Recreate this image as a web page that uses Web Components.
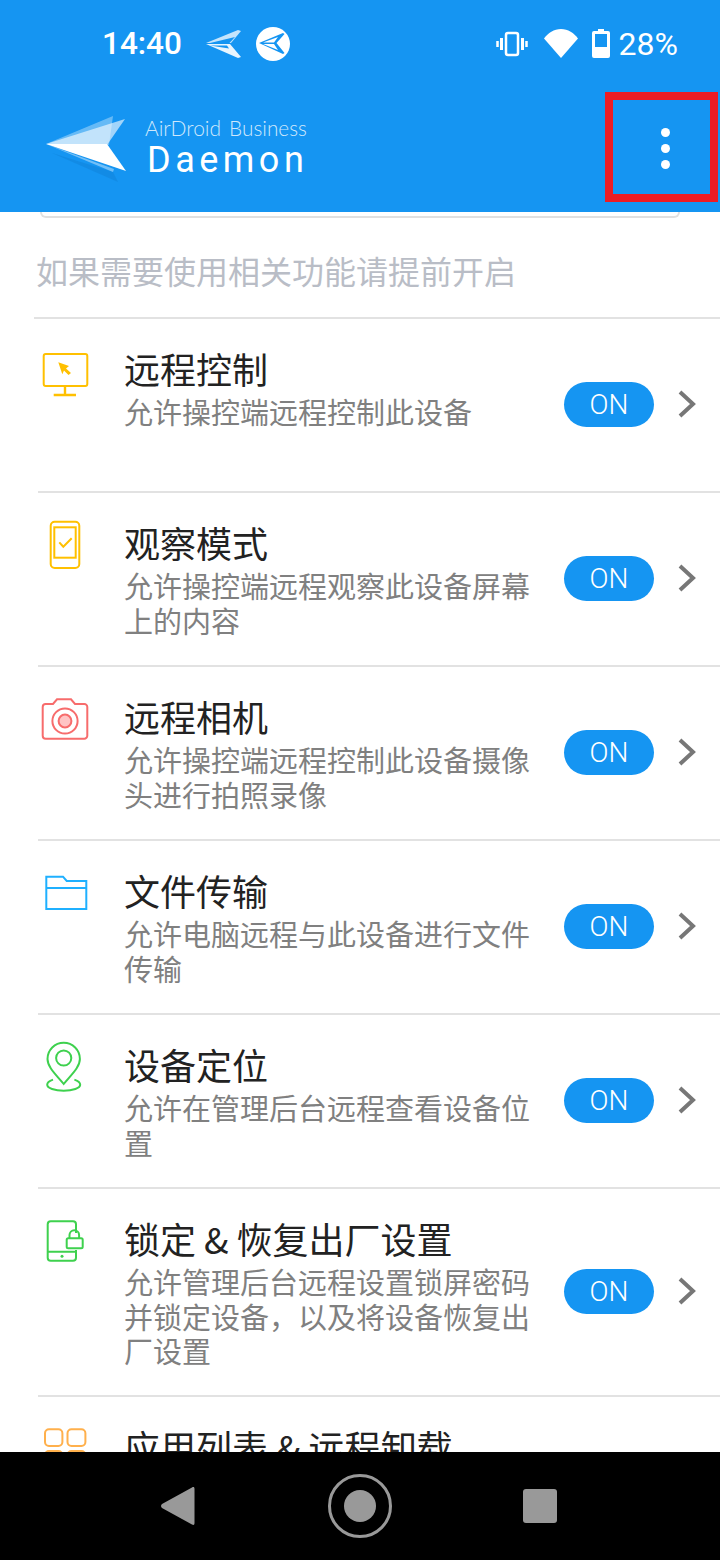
<!DOCTYPE html>
<html lang="zh">
<head>
<meta charset="utf-8">
<title>AirDroid Business Daemon</title>
<style>
  html, body { margin: 0; padding: 0; background: #fff; }
  body { font-family: "Noto Sans CJK SC", "Noto Sans", sans-serif; }
  feature-row svg { display: block; fill: none; stroke-width: 2; }
</style>
</head>
<body>
<phone-screen>
  <status-bar slot="top"></status-bar>
  <app-header slot="top"></app-header>

  <top-card></top-card>
  <section-hint>如果需要使用相关功能请提前开启</section-hint>

  <feature-row heading="远程控制" sub="允许操控端远程控制此设备" style="--row-h:174px">
    <svg width="87" height="70" stroke="#ffc000">
      <rect x="5.7" y="12" width="43.6" height="32" rx="2"/>
      <path d="M27 44v8M15.7 53h22.3" stroke-width="2.4"/>
      <polygon points="20.3,20.3 31,24 28,26.5 33,31 30.5,33 26,28.5 24.3,32.3" fill="#ffc000" stroke="none"/>
    </svg>
  </feature-row>

  <feature-row heading="观察模式" sub="允许操控端远程观察此设备屏幕上的内容" style="--row-h:174px">
    <svg width="87" height="70" stroke="#ffc000">
      <rect x="12.7" y="5.7" width="28.6" height="46.3" rx="4"/>
      <rect x="16.3" y="11.3" width="21.4" height="30.4"/>
      <path d="M21.3 26.3l4 4.4 8.4-8.4"/>
    </svg>
  </feature-row>

  <feature-row heading="远程相机" sub="允许操控端远程控制此设备摄像头进行拍照录像" style="--row-h:174px">
    <svg width="87" height="70" stroke="#f76c6c">
      <path d="M7.7 14H15l4-4.7h14l4 4.7h9.3a3 3 0 0 1 3 3v28.7a3 3 0 0 1-3 3H7.7a3 3 0 0 1-3-3V17a3 3 0 0 1 3-3z"/>
      <circle cx="27" cy="31" r="12.6"/>
      <circle cx="27" cy="31" r="6.4" fill="#ffc4c4"/>
    </svg>
  </feature-row>

  <feature-row heading="文件传输" sub="允许电脑远程与此设备进行文件传输" style="--row-h:174px">
    <svg width="87" height="70" stroke="#1fb0ff">
      <path d="M8.3 12.7h16.7l3.7 4.3h19.6v28h-40z"/>
      <path d="M8 24h40"/>
    </svg>
  </feature-row>

  <feature-row heading="设备定位" sub="允许在管理后台远程查看设备位置" style="--row-h:174px">
    <svg width="87" height="70" stroke="#3ed14e" stroke-width="2.2">
      <path d="M25.7 46C19 37.5 9.5 29.5 9.5 21a16.2 16.2 0 0 1 32.4 0c0 8.500-9.500 16.500-16.200 25z"/>
      <circle cx="25.700" cy="20" r="7.600"/>
      <path d="M15 41.600C11.500 42.800 9.200 44.500 9.200 46.700c0 3.300 7.400 6 16.500 6s16.500-2.700 16.500-6c0-2.200-2.300-3.900-5.800-5.100"/>
    </svg>
  </feature-row>

  <feature-row heading="锁定 &amp; 恢复出厂设置" sub="允许管理后台远程设置锁屏密码并锁定设备，以及将设备恢复出厂设置" style="--row-h:208px">
    <svg width="87" height="70" stroke="#3ed14e">
      <path d="M38 21v-8.700a3 3 0 0 0-3-3H12.700a3 3 0 0 0-3 3v33.400a3 3 0 0 0 3 3H35a3 3 0 0 0 3-3v-7.700M9.700 39.700h28.300"/>
      <circle cx="24" cy="44.300" r="1.500" fill="#3ed14e" stroke="none"/>
      <rect x="28.700" y="26.300" width="16" height="10" rx="1.500"/>
      <path d="M31.500 26v-3a4.800 4.800 0 0 1 9.600 0v3"/>
    </svg>
  </feature-row>

  <feature-row heading="应用列表 &amp; 远程卸载" sub="" style="--row-h:174px">
    <svg width="87" height="70" stroke="#ffb04c">
      <rect x="7" y="9.300" width="17.400" height="16.700" rx="4"/>
      <rect x="29.500" y="9.300" width="17.900" height="16.700" rx="4"/>
      <rect x="7" y="31" width="17.400" height="16.700" rx="4"/>
      <rect x="29.500" y="31" width="17.900" height="16.700" rx="4"/>
    </svg>
  </feature-row>

  <nav-bar slot="bottom"></nav-bar>
</phone-screen>

<script>
class PhoneScreen extends HTMLElement {
  constructor() {
    super();
    this.attachShadow({ mode: "open" }).innerHTML = `
    <style>
      :host { display: flex; flex-direction: column; width: 720px; height: 1560px; overflow: hidden; background: #fff; }
      .top { flex: none; background: #1595f2; }
      .content { flex: 1; min-height: 0; overflow: hidden; }
      .bottom { flex: none; }
    </style>
    <div class="top"><slot name="top"></slot></div>
    <div class="content"><slot></slot></div>
    <div class="bottom"><slot name="bottom"></slot></div>`;
  }
}

class StatusBar extends HTMLElement {
  constructor() {
    super();
    this.attachShadow({ mode: "open" }).innerHTML = `
    <style>
      :host { display: flex; align-items: center; height: 88px; padding: 0 42px 1px 102px; box-sizing: border-box; color: #fff;
        font: 500 31.500px/1 Roboto, sans-serif; }
      svg { display: block; flex: none; }
      .spacer { flex: 1; }
      .send { margin-left: 24px; }
      .circle { margin-left: 14px; }
      .wifi { margin-left: 16px; }
      .batt { margin-left: 14px; }
      .pct { margin-left: 9px; font-weight: 400; font-size: 32px; }
    </style>
    <span>14:40</span>
    <svg class="send" width="36" height="30" viewBox="0 0 36 30" fill="#fff">
      <path d="M0 14L32 1l3 1-10 12z" opacity=".75"/>
      <path d="M2 14.500L29 8l-6 6.500z" fill="#1595f2"/>
      <path d="M0 15h24l11 13-3 1z" opacity=".9"/>
      <path d="M4 16.500h17l2 3z" fill="#1595f2"/>
    </svg>
    <svg class="circle" width="34" height="34" viewBox="0 0 34 34">
      <circle cx="17" cy="17" r="17" fill="#fff"/>
      <path d="M3 16L27 6l1.500 1-8 9 8 10-1.500 1z" fill="#1595f2"/>
      <path d="M7 15.500L22 10l-4 5.500zM7 17h11l4 6z" fill="#fff"/>
    </svg>
    <span class="spacer"></span>
    <svg width="32" height="26" viewBox="0 0 32 26" fill="none" stroke="#fff" stroke-width="2">
      <rect x="10" y="2" width="12" height="22" rx="2" stroke-width="2.500"/>
      <path d="M5.500 7v12M26.500 7v12" stroke-width="3"/>
      <path d="M1.500 10v6M30.500 10v6" stroke-width="2.500"/>
    </svg>
    <svg class="wifi" width="34" height="29" viewBox="0 0 34 29" fill="#fff">
      <path d="M17 29L0 9.500C4 4 10 0 17 0s13 4 17 9.500z"/>
    </svg>
    <svg class="batt" width="18" height="29" viewBox="0 0 18 29" fill="#fff">
      <path d="M6 0h6v2h4a2 2 0 0 1 2 2v23a2 2 0 0 1-2 2H2a2 2 0 0 1-2-2V4a2 2 0 0 1 2-2h4z"/>
      <rect x="3" y="5" width="12" height="13" fill="#1595f2"/>
    </svg>
    <span class="pct">28%</span>`;
  }
}

class AppHeader extends HTMLElement {
  constructor() {
    super();
    this.attachShadow({ mode: "open" }).innerHTML = `
    <style>
      :host { display: flex; align-items: flex-start; position: relative; height: 124px; padding: 26px 0 0 44px; box-sizing: border-box; color: #fff; }
      svg { display: block; flex: none; }
      .brand { margin-left: 17px; display: flex; flex-direction: column; padding-top: 2px; white-space: nowrap; }
      .line1 { font: 300 21px/24px Lato, Roboto, sans-serif; color: #cfe8fc; display: flex; gap: 8px; }
      .line1 b { font-weight: 300; font-size: 20.800px; }
      .line2 { font: 400 36px/38px Roboto, sans-serif; letter-spacing: 4.500px; margin: 1px 0 0 2px; }
      .menu { position: absolute; left: 605px; top: 4px; width: 113px; height: 110px; padding: 2px 0 0 7px; box-sizing: border-box; border: 8px solid #ed1c24; display: flex; flex-direction: column; align-items: center; justify-content: center; gap: 7px; }
      .menu i { width: 9px; height: 9px; border-radius: 50%; background: #fff; }
    </style>
    <svg width="84" height="70" viewBox="0 0 84 70">
      <path d="M2 30L69 2l-4 29z" fill="#fff" opacity=".35"/>
      <path d="M2 30L81 5 63 31z" fill="#fff" opacity=".6"/>
      <path d="M8 39l66 29-5-10z" fill="#0b6fc0" opacity=".25"/>
      <path d="M2 30l67 28 1-3z" fill="#fff" opacity=".4"/>
      <path d="M2 30h61l19 27z" fill="#fff"/>
    </svg>
    <div class="brand">
      <div class="line1"><span>AirDroid</span><b>Business</b></div>
      <div class="line2">Daemon</div>
    </div>
    <div class="menu"><i></i><i></i><i></i></div>`;
  }
}

class TopCard extends HTMLElement {
  constructor() {
    super();
    this.attachShadow({ mode: "open" }).innerHTML = `
    <style>
      :host { display: block; height: 6px; margin: 0 40px; box-sizing: border-box; border: 2px solid #e0e0e0; border-top: 0; border-radius: 0 0 18px 18px; }
    </style>`;
  }
}

class SectionHint extends HTMLElement {
  constructor() {
    super();
    this.attachShadow({ mode: "open" }).innerHTML = `
    <style>
      :host { display: flex; align-items: center; height: 101px; margin-left: 34px; padding: 5px 0 0 2px; box-sizing: border-box; border-bottom: 2px solid #e2e2e2; color: #b9bdc6; font-size: 32px; line-height: 40px; }
    </style>
    <slot></slot>`;
  }
}

class FeatureRow extends HTMLElement {
  constructor() {
    super();
    const sub = this.getAttribute("sub");
    this.attachShadow({ mode: "open" }).innerHTML = `
    <style>
      :host { display: flex; align-items: flex-start; height: var(--row-h); margin-left: 38px; box-sizing: border-box; border-bottom: 2px solid #e2e2e2; position: relative; }
      .icon { flex: none; width: 86px; padding-top: 23px; }
      .text { flex: none; width: 410px; padding-top: 30px; }
      h3 { margin: 0; font-weight: 400; font-size: 36px; line-height: 38px; color: #222; white-space: nowrap; }
      p { margin: 7px 0 0; font-size: 29px; line-height: 34.500px; color: #808080; }
      .side { flex: 1; align-self: center; display: flex; align-items: center; margin-top: -2px; padding-left: 30px; }
      .on { width: 90px; height: 45px; border-radius: 23px; background: #1595f2; color: #fff; font: 300 28px/45px Roboto, sans-serif; text-align: center; }
      svg { display: block; margin-left: 24px; }
    </style>
    <div class="icon"><slot></slot></div>
    <div class="text">
      <h3>${this.getAttribute("heading")}</h3>
      ${sub ? `<p>${sub}</p>` : ""}
    </div>
    <div class="side">
      <div class="on">ON</div>
      <svg width="18" height="28" viewBox="0 0 18 28" fill="none" stroke="#777" stroke-width="4"><path d="M2 2l13 12L2 26"/></svg>
    </div>`;
  }
}

class NavBar extends HTMLElement {
  constructor() {
    super();
    this.attachShadow({ mode: "open" }).innerHTML = `
    <style>
      :host { display: grid; grid-template-columns: repeat(3, 180px); justify-content: center; align-items: center; justify-items: center; height: 108px; padding-bottom: 1px; box-sizing: border-box; background: #000; }
      svg { display: block; }
      .back { margin-right: 4px; }
    </style>
    <svg class="back" width="34" height="38" viewBox="0 0 34 38" fill="#999"><path d="M31 .500c1.500-1 2.500-.500 2.500 1.500v34c0 2-1 2.500-2.500 1.500L1 21c-1.300-1-1.300-3 0-4z"/></svg>
    <svg width="64" height="64" viewBox="0 0 64 64" fill="none"><circle cx="32" cy="32" r="30.500" stroke="#999" stroke-width="3"/><circle cx="32" cy="32" r="16" fill="#999"/></svg>
    <svg width="34" height="34" viewBox="0 0 34 34" fill="#999"><rect width="34" height="34" rx="3"/></svg>`;
  }
}

customElements.define("phone-screen", PhoneScreen);
customElements.define("status-bar", StatusBar);
customElements.define("app-header", AppHeader);
customElements.define("top-card", TopCard);
customElements.define("section-hint", SectionHint);
customElements.define("feature-row", FeatureRow);
customElements.define("nav-bar", NavBar);
</script>
</body>
</html>
